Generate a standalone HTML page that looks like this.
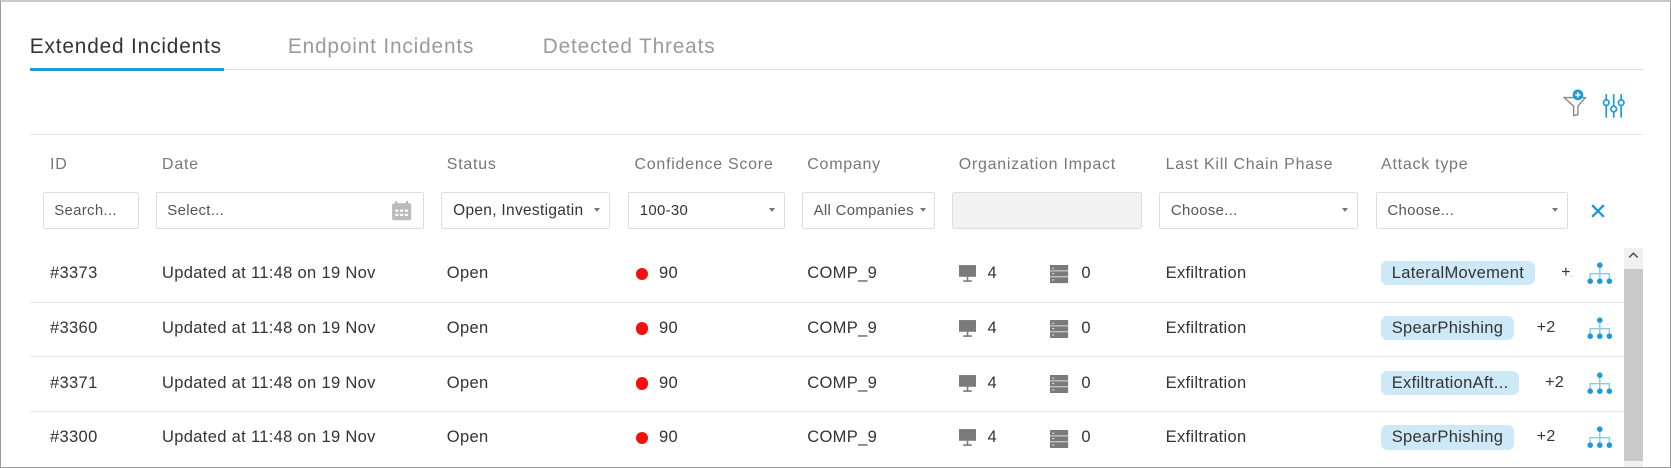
<!DOCTYPE html>
<html><head><meta charset="utf-8"><style>
*{box-sizing:border-box;margin:0;padding:0}
html,body{width:1671px;height:468px;overflow:hidden;background:#fff}
#w{zoom:1.0665;width:1567px;height:439px;position:relative;font-family:"Liberation Sans",sans-serif;color:#333;border:1px solid #9a9a9a;border-top:2px solid #c8c8c8;overflow:hidden}
.a{position:absolute;white-space:nowrap}
.tab{font-size:19.5px;top:31px;letter-spacing:0.8px}
.h{font-size:15px;color:#777;top:144px;letter-spacing:0.7px}
.f{position:absolute;top:178px;height:35px;border:1px solid #ddd;border-radius:2px;font-size:14px;color:#555;padding:9px 10px;overflow:hidden;white-space:nowrap;letter-spacing:0.3px}
.dd{position:absolute;right:8px;top:14px;width:0;height:0;border-left:3px solid transparent;border-right:3px solid transparent;border-top:4px solid #777}
.c{font-size:15.5px;color:#333;letter-spacing:0.3px}
.sep{position:absolute;left:27px;width:1495px;height:1px;background:#e6e6e6}
.tag{background:#cde9f7;border-radius:6px;padding:2px 10px;font-size:15.5px;letter-spacing:0.3px}
.dot{width:12px;height:12px;border-radius:50%;background:#f50f0f}
</style></head><body><div id="w">
<div class="a tab" style="left:27px">Extended Incidents</div>
<div class="a tab" style="left:269px;color:#9a9a9a">Endpoint Incidents</div>
<div class="a tab" style="left:508px;color:#9a9a9a">Detected Threats</div>
<div class="a" style="left:27px;top:63px;width:1513px;height:1px;background:#ddd"></div>
<div class="a" style="left:27px;top:62px;width:182px;height:3px;background:#1d9ad8"></div>

<svg class="a" style="left:1465px;top:82px" width="26" height="28" viewBox="0 0 26 28"><path d="M1 8h20l-7 8v8l-4 1v-9z" fill="none" stroke="#888" stroke-width="1.3"/><circle cx="14" cy="5.5" r="5" fill="#1d9ad8"/><path d="M14 3v5M11.5 5.5h5" stroke="#fff" stroke-width="1.4"/></svg>
<svg class="a" style="left:1501px;top:84px" width="22" height="26" viewBox="0 0 22 26"><g stroke="#1d9ad8" stroke-width="1.6" fill="#fff"><path d="M4 2v22M11 2v22M18 2v22"/><circle cx="4" cy="10" r="2.6"/><circle cx="11" cy="16" r="2.6"/><circle cx="18" cy="10" r="2.6"/></g></svg>

<div class="a" style="left:27px;top:124px;width:1513px;height:1px;background:#e6e6e6"></div>

<div class="a h" style="left:46px">ID</div>
<div class="a h" style="left:151px">Date</div>
<div class="a h" style="left:418px">Status</div>
<div class="a h" style="left:594px">Confidence Score</div>
<div class="a h" style="left:756px">Company</div>
<div class="a h" style="left:898px">Organization Impact</div>
<div class="a h" style="left:1092px">Last Kill Chain Phase</div>
<div class="a h" style="left:1294px">Attack type</div>

<div class="f" style="left:39px;width:90px">Search...</div>
<div class="f" style="left:145px;width:252px">Select...
<svg style="position:absolute;right:10px;top:7px" width="20" height="20" viewBox="0 0 20 20"><rect x="1" y="3" width="18" height="16" rx="2" fill="#bbb"/><rect x="4" y="1" width="2" height="5" fill="#bbb"/><rect x="14" y="1" width="2" height="5" fill="#bbb"/><g fill="#fff"><rect x="4" y="9" width="3" height="2"/><rect x="8.5" y="9" width="3" height="2"/><rect x="13" y="9" width="3" height="2"/><rect x="4" y="13" width="3" height="2"/><rect x="8.5" y="13" width="3" height="2"/><rect x="13" y="13" width="3" height="2"/></g></svg></div>
<div class="f" style="left:413px;width:158px;color:#333;font-size:14.5px">Open, Investigatin<span class="dd"></span></div>
<div class="f" style="left:588px;width:147px;color:#333">100-30<span class="dd"></span></div>
<div class="f" style="left:751px;width:125px">All Companies<span class="dd" style="background:#fff;box-shadow:0 0 0 6px #fff"></span></div>
<div class="f" style="left:892px;width:178px;background:#f2f2f2"></div>
<div class="f" style="left:1086px;width:186px">Choose...<span class="dd"></span></div>
<div class="f" style="left:1289px;width:180px">Choose...<span class="dd"></span></div>
<svg class="a" style="left:1490px;top:188px" width="15" height="15" viewBox="0 0 15 15"><path d="M2 2l11 11M13 2L2 13" stroke="#1d9ad8" stroke-width="2.2"/></svg>

<div class="a" style="left:1522px;top:231px;width:18px;height:210px;background:#f0f0f0"></div>
<div class="a" style="left:1522px;top:250px;width:18px;height:180px;background:#c9c9c9"></div>
<svg class="a" style="left:1525px;top:233px" width="12" height="10"><path d="M2 7l4-4 4 4" fill="none" stroke="#555" stroke-width="1.5"/></svg>

<div id="rows"></div>
<script>
var ids=["#3373","#3360","#3371","#3300"],tags=["LateralMovement","SpearPhishing","ExfiltrationAft...","SpearPhishing"],pl=[1463,1440,1448,1440];
var h="";
for(var i=0;i<4;i++){var y=255+i*51.3,t=y-10;
h+='<div class="a c" style="left:46px;top:'+t+'px">'+ids[i]+'</div>';
h+='<div class="a c" style="left:151px;top:'+t+'px">Updated at 11:48 on 19 Nov</div>';
h+='<div class="a c" style="left:418px;top:'+t+'px">Open</div>';
h+='<div class="a dot" style="left:595px;top:'+(y-6)+'px"></div>';
h+='<div class="a c" style="left:617px;top:'+t+'px">90</div>';
h+='<div class="a c" style="left:756px;top:'+t+'px">COMP_9</div>';
h+='<svg class="a" style="left:898px;top:'+(y-9)+'px" width="16" height="18" viewBox="0 0 16 18"><rect x="0" y="1" width="16" height="11" fill="#7a7a7a"/><path d="M8 12v4M4 16h8" stroke="#7a7a7a" stroke-width="1.5"/></svg>';
h+='<div class="a c" style="left:925px;top:'+t+'px">4</div>';
h+='<svg class="a" style="left:984px;top:'+(y-8)+'px" width="17" height="17" viewBox="0 0 17 17"><rect x="0" y="0" width="17" height="17" fill="#7a7a7a"/><path d="M0 5.5h17M0 11h17" stroke="#ddd"/><path d="M2 3h2M2 8h2M2 14h2" stroke="#ddd"/></svg>';
h+='<div class="a c" style="left:1013px;top:'+t+'px">0</div>';
h+='<div class="a c" style="left:1092px;top:'+t+'px">Exfiltration</div>';
h+='<div class="a tag" style="left:1294px;top:'+(y-12)+'px">'+tags[i]+'</div>';
if(i>0)h+='<div class="a c" style="left:'+pl[i]+'px;top:'+(t+1)+'px;font-size:15px">+2</div>';
h+='<svg class="a" style="left:1487px;top:'+(y-11)+'px" width="24" height="22" viewBox="0 0 24 22"><path d="M12 3v8M3 18v-7h18v7M12 11v7" fill="none" stroke="#8cc8ec" stroke-width="1.3"/><g fill="#1d9ad8"><circle cx="12" cy="3" r="2.6"/><circle cx="3" cy="18" r="2.6"/><circle cx="12" cy="18" r="2.6"/><circle cx="21" cy="18" r="2.6"/></g></svg>';
if(i<3)h+='<div class="sep" style="top:'+(y+26)+'px"></div>';}
h+='<div class="a c" style="left:1463px;top:246px;font-size:15px;width:10px;overflow:hidden">+2</div>';
document.getElementById("rows").innerHTML=h;
</script>
</div></body></html>
